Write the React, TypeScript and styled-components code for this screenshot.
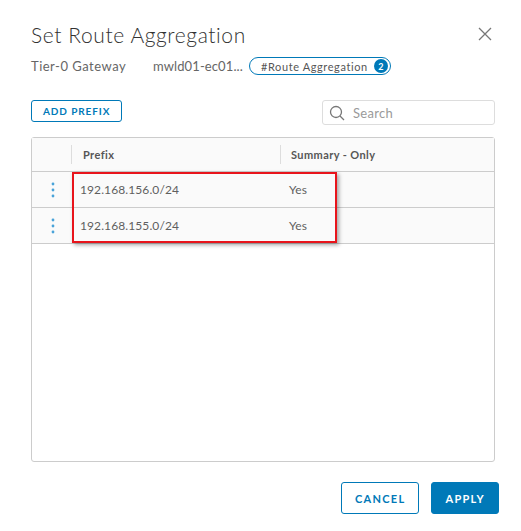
import React from "react";
import styled, { createGlobalStyle } from "styled-components";

const Global = createGlobalStyle`
  html, body {
    margin: 0;
    padding: 0;
    background: #fff;
  }
  body {
    font-family: Lato, "Open Sans", sans-serif;
    color: #565656;
  }
`;

const Dialog = styled.div`
  width: 521px;
  height: 531px;
  box-sizing: border-box;
  padding: 20px 26px 0 31px;
  display: flex;
  flex-direction: column;
`;

const Header = styled.div`
  display: flex;
  align-items: center;
  justify-content: space-between;
  height: 28px;
`;

const Title = styled.h3`
  margin: 0;
  font-size: 21px;
  font-weight: 300;
  color: #313131;
  letter-spacing: 0.6px;
`;

const Close = styled.button`
  border: 0;
  background: none;
  padding: 0;
  width: 16px;
  height: 16px;
  display: flex;
  align-items: center;
  justify-content: center;
  margin-right: 2px;
`;

const Meta = styled.div`
  display: flex;
  align-items: center;
  margin-top: 8px;
  height: 20px;
  font-size: 13px;
  color: #666;
`;

const MetaItem = styled.span<{ $w: number; $ls: number }>`
  width: ${(p) => p.$w}px;
  letter-spacing: ${(p) => p.$ls}px;
  white-space: nowrap;
`;

const Pill = styled.span`
  display: inline-flex;
  align-items: center;
  height: 18px;
  box-sizing: border-box;
  border: 1px solid #0079b8;
  border-radius: 9px;
  padding: 0 2px 0 11px;
  font-size: 11px;
  letter-spacing: 0.6px;
  color: #565656;
  gap: 6px;
`;

const Badge = styled.span`
  width: 14px;
  height: 14px;
  border-radius: 50%;
  background: #0079b8;
  color: #fff;
  font-size: 9px;
  font-weight: 700;
  letter-spacing: 0;
  display: flex;
  align-items: center;
  justify-content: center;
`;

const Toolbar = styled.div`
  display: flex;
  align-items: flex-start;
  justify-content: space-between;
  margin-top: 24px;
  height: 25px;
`;

const OutlineButton = styled.button<{ $h: number; $fs: number }>`
  height: ${(p) => p.$h}px;
  box-sizing: border-box;
  border: 1px solid #0079b8;
  border-radius: 3px;
  background: #fff;
  color: #0079b8;
  font-family: Lato, sans-serif;
  font-weight: 700;
  font-size: ${(p) => p.$fs}px;
  letter-spacing: ${(p) => (p.$fs > 10 ? 1.3 : 0.9)}px;
  padding: 0 ${(p) => (p.$fs > 10 ? 13 : 11)}px;
`;

const SolidButton = styled(OutlineButton)`
  background: #0079b8;
  color: #fff;
`;

const SearchBox = styled.div`
  width: 173px;
  height: 25px;
  box-sizing: border-box;
  border: 1px solid #ddd;
  border-radius: 3px;
  display: flex;
  align-items: center;
  gap: 8px;
  padding-left: 6px;
  font-size: 13px;
  letter-spacing: 0.3px;
  color: #9a9a9a;
`;

const Grid = styled.div`
  margin-top: 12px;
  height: 325px;
  box-sizing: border-box;
  border: 1px solid #ccc;
  border-radius: 3px;
  display: flex;
  flex-direction: column;
  position: relative;
`;

const Row = styled.div<{ $head?: boolean }>`
  display: grid;
  grid-template-columns: 39px 209px 1fr;
  height: ${(p) => (p.$head ? 34 : 36)}px;
  flex-shrink: 0;
  align-items: center;
  background: #fafafa;
  border-bottom: 1px solid #ccc;
  box-sizing: border-box;
  font-size: ${(p) => (p.$head ? 11 : 12)}px;
  font-weight: ${(p) => (p.$head ? 700 : 400)};
  color: ${(p) => (p.$head ? "#565656" : "#5f5f5f")};
  letter-spacing: ${(p) => (p.$head ? "0.4px" : "0.1px")};
`;

const Cell = styled.div<{ $sep?: boolean; $pl: number }>`
  padding-left: ${(p) => p.$pl}px;
  height: 100%;
  display: flex;
  align-items: center;
  position: relative;
  ${(p) =>
    p.$sep &&
    `&::before {
      content: "";
      position: absolute;
      left: 0;
      top: 7px;
      bottom: 7px;
      border-left: 1px solid #ddd;
    }`}
`;

const DotsCell = styled.div`
  display: flex;
  justify-content: center;
  align-items: center;
  height: 100%;
  padding-left: 2px;
`;

const Highlight = styled.div`
  position: absolute;
  left: 40px;
  top: 34px;
  width: 265px;
  height: 71px;
  box-sizing: border-box;
  border: 2px solid #e8141b;
  box-shadow: 2px 2px 4px rgba(0, 0, 0, 0.35);
  pointer-events: none;
`;

const Footer = styled.div`
  display: flex;
  justify-content: flex-end;
  gap: 12px;
  margin-top: 20px;
  margin-right: -4px;
`;

const Dots = () => (
  <svg width="4" height="16" viewBox="0 0 4 16">
    <circle cx="2" cy="2" r="1.4" fill="#49a3d9" />
    <circle cx="2" cy="8" r="1.4" fill="#49a3d9" />
    <circle cx="2" cy="14" r="1.4" fill="#49a3d9" />
  </svg>
);

const rows = ["192.168.156.0/24", "192.168.155.0/24"];

export default function App() {
  return (
    <Dialog>
      <Global />
      <Header>
        <Title>Set Route Aggregation</Title>
        <Close aria-label="close">
          <svg width="14" height="14" viewBox="0 0 14 14">
            <path d="M1 1L13 13M13 1L1 13" stroke="#777" strokeWidth="1.3" />
          </svg>
        </Close>
      </Header>
      <Meta>
        <MetaItem $w={122} $ls={0.5}>Tier-0 Gateway</MetaItem>
        <MetaItem $w={96} $ls={0.1}>mwld01-ec01...</MetaItem>
        <Pill>
          #Route Aggregation
          <Badge>2</Badge>
        </Pill>
      </Meta>
      <Toolbar>
        <OutlineButton $h={22} $fs={10}>ADD PREFIX</OutlineButton>
        <SearchBox>
          <svg width="16" height="16" viewBox="0 0 16 16">
            <circle cx="7" cy="7" r="5.5" fill="none" stroke="#777" strokeWidth="1.3" />
            <path d="M11 11L15 15" stroke="#777" strokeWidth="1.3" />
          </svg>
          Search
        </SearchBox>
      </Toolbar>
      <Grid>
        <Row $head>
          <div />
          <Cell $sep $pl={12}>Prefix</Cell>
          <Cell $sep $pl={11}>Summary - Only</Cell>
        </Row>
        {rows.map((r) => (
          <Row key={r}>
            <DotsCell>
              <Dots />
            </DotsCell>
            <Cell $pl={9}>{r}</Cell>
            <Cell $pl={9}>Yes</Cell>
          </Row>
        ))}
        <Highlight />
      </Grid>
      <Footer>
        <OutlineButton $h={32} $fs={11}>CANCEL</OutlineButton>
        <SolidButton $h={32} $fs={11}>APPLY</SolidButton>
      </Footer>
    </Dialog>
  );
}
